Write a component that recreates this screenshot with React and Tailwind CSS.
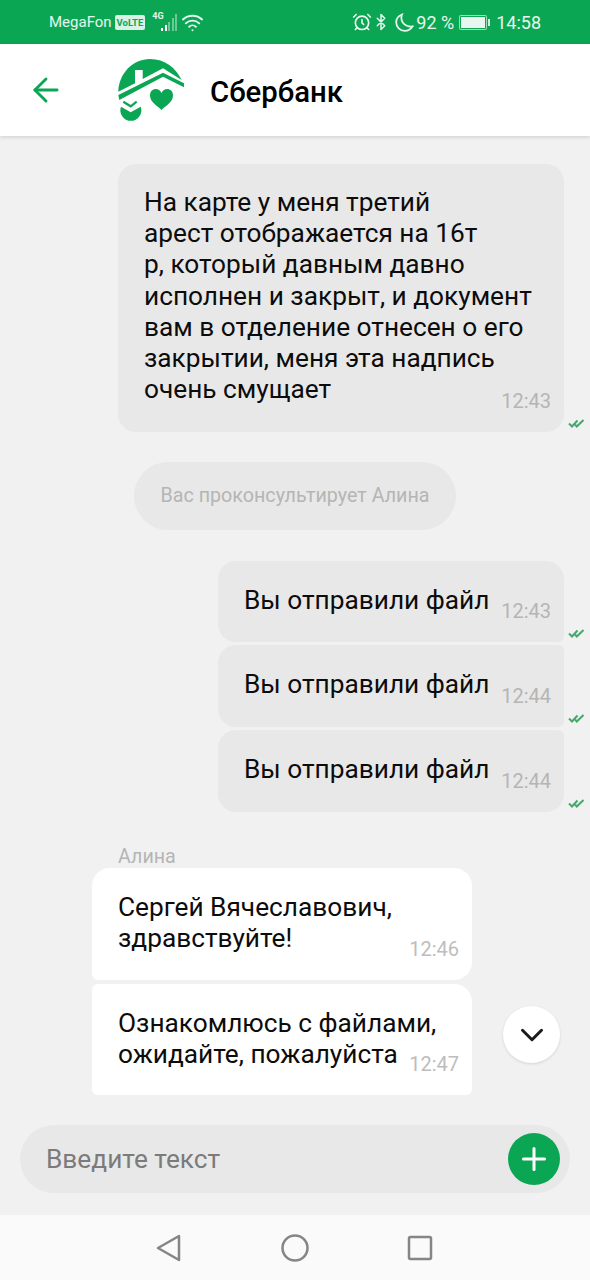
import { Fragment } from 'react'
import { ArrowLeft, Plus, ChevronDown, AlarmClock, Bluetooth, Wifi } from 'lucide-react'

function Checks() {
  return (
    <svg className="absolute right-[-21px] bottom-[3px]" width="17" height="11" viewBox="0 0 17 11" fill="none" stroke="#45a86c" strokeWidth="2">
      <path d="M1 5.5 L4 8.5 L9.5 2.5" />
      <path d="M7 6.5 L8.8 8.5 L15.5 2" />
    </svg>
  )
}

function Outgoing({ width, height, rounded, time, lines }) {
  return (
    <div className={`relative self-end bg-[#e8e8e8] pl-[26px] text-[26.25px] leading-[31.2px] text-[#0c0c0c] ${width} ${height} ${rounded}`}>
      {lines.map((l) => (
        <Fragment key={l}>{l}<br /></Fragment>
      ))}
      <span className="absolute right-[13px] bottom-[19px] text-[20px] leading-[24px] text-[#b5b5b5]">{time}</span>
      <Checks />
    </div>
  )
}

function Incoming({ lines, time, height, rounded, className }) {
  return (
    <div className={`relative ml-[92px] w-[380px] shrink-0 bg-white pl-[26px] pt-[24px] text-[26.25px] leading-[31.2px] text-[#0c0c0c] ${height} ${rounded} ${className || ''}`}>
      {lines.map((l) => (
        <Fragment key={l}>{l}<br /></Fragment>
      ))}
      <span className="absolute right-[13px] bottom-[19px] text-[20px] leading-[24px] text-[#bdbdbd]">{time}</span>
    </div>
  )
}

function Logo() {
  return (
    <svg width="68" height="62" viewBox="0 0 68 62" fill="#0ba653">
      {/* dome with chimney cut out */}
      <path d="M0.3 32.7 C1 14 15 0 32 0 C47 0 58 9 63.7 21 L45 9.3 L24.7 20 L24.7 11 L17 11 L17 24.3 Z" />
      {/* roof */}
      <path d="M0.3 36 L45 13.7 L66 24.3 L66 28.3 L45 17.7 L1.3 41 Z" />
      {/* heart */}
      <path d="M32 36.5 C32 29 41 28 43.5 34 C46 28 55 29 55 36.5 C55 43 48 46.5 43.5 51 C39 46.5 32 43 32 36.5 Z" />
      {/* check badge */}
      <path d="M3 47.7 L12.7 53.3 L22.7 47.7 A10.5 10.5 0 1 1 3 47.7 Z" />
      <path d="M5.3 42.7 L12.7 47.3 L18.7 42.7" fill="none" stroke="#0ba653" strokeWidth="2.2" />
    </svg>
  )
}

function Signal() {
  return (
    <div className="flex h-[17px] items-end gap-[1.5px]">
      {[3, 6, 9, 13, 17].map((h, i) => (
        <div key={h} className={`w-[2px] ${i < 2 ? 'bg-white' : 'bg-white/40'}`} style={{ height: h }} />
      ))}
    </div>
  )
}

function MoonIcon() {
  return (
    <svg className="ml-[5px]" width="19" height="19" viewBox="0 0 19 19" fill="none" stroke="currentColor" strokeWidth="1.8">
      <path d="M7 1.5 C5 7 8 14 17.5 13.5 C15.5 16.5 12.5 17.8 9.8 17.8 C5 17.8 1.2 14 1.2 9.3 C1.2 6 3.5 3 7 1.5 Z" />
    </svg>
  )
}

export default function App() {
  return (
    <div className="relative flex h-[1280px] w-[590px] flex-col overflow-hidden bg-[#f1f1f1] font-['Roboto',sans-serif]">
      {/* status bar */}
      <div className="flex h-[44px] shrink-0 items-center bg-[#0ba653] pl-[49px] pr-[49px] text-white/90">
        <span className="text-[15px]">MegaFon</span>
        <span className="ml-[3px] rounded-[2px] bg-white/85 px-[2px] text-[9.5px] font-bold leading-[15px] text-[#0ba653]">VoLTE</span>
        <div className="relative ml-[7px] flex items-end">
          <span className="absolute left-0 top-[-3px] text-[9px] font-bold leading-[10px]">4G</span>
          <div className="w-[9px]" />
          <Signal />
        </div>
        <Wifi size={23} className="ml-[4px]" strokeWidth={2} />
        <AlarmClock size={20} className="ml-auto" strokeWidth={2} />
        <Bluetooth size={18} className="ml-0" strokeWidth={2} />
        <MoonIcon />
        <span className="ml-[2px] text-[18px]">92 %</span>
        <div className="ml-[5px] flex items-center">
          <div className="h-[15px] w-[28px] rounded-[2px] border border-white/60 bg-white/90 bg-clip-content p-[1px]" />
          <div className="ml-[1px] h-[7px] w-[2px] bg-white/80" />
        </div>
        <span className="ml-[6px] text-[18px]">14:58</span>
      </div>

      {/* header */}
      <div className="z-10 flex h-[92px] shrink-0 items-center bg-white pl-[27px] shadow-[0_1px_4px_rgba(0,0,0,0.15)]">
        <ArrowLeft size={38} color="#0ba653" strokeWidth={1.8} />
        <div className="ml-[53px]"><Logo /></div>
        <span className="ml-[24px] mt-[6px] text-[29.3px] font-medium text-black">Сбербанк</span>
      </div>

      {/* messages */}
      <div className="flex min-h-0 flex-1 flex-col overflow-hidden pt-[28px]">
        <Outgoing
          width="mr-[26px] w-[446px]"
          height="h-[268px] shrink-0 pt-[23px]"
          rounded="rounded-[18px]"
          time="12:43"
          lines={['На карте у меня третий', 'арест отображается на 16т', 'р, который давным давно', 'исполнен и закрыт, и документ', 'вам в отделение отнесен о его', 'закрытии, меня эта надпись', 'очень смущает']}
        />
        <div className="ml-[134px] mt-[30px] flex h-[68px] w-[322px] shrink-0 items-center justify-center rounded-[34px] bg-[#e8e8e8] text-[19.7px] text-[#b5b5b5]">
          Вас проконсультирует Алина
        </div>
        <Outgoing
          width="mr-[26px] w-[346px]"
          height="mt-[31px] h-[81px] shrink-0 pt-[24px]"
          rounded="rounded-t-[18px] rounded-bl-[18px] rounded-br-[6px]"
          time="12:43"
          lines={['Вы отправили файл']}
        />
        <Outgoing
          width="mr-[26px] w-[346px]"
          height="mt-[3px] h-[82px] shrink-0 pt-[24px]"
          rounded="rounded-l-[18px] rounded-r-[6px]"
          time="12:44"
          lines={['Вы отправили файл']}
        />
        <Outgoing
          width="mr-[26px] w-[346px]"
          height="mt-[3px] h-[82px] shrink-0 pt-[24px]"
          rounded="rounded-l-[18px] rounded-tr-[6px] rounded-br-[18px]"
          time="12:44"
          lines={['Вы отправили файл']}
        />
        <div className="ml-[118px] mt-[33px] h-[23px] shrink-0 text-[19.7px] leading-[23px] text-[#b5b5b5]">Алина</div>
        <Incoming
          height="h-[112px]"
          rounded="rounded-t-[18px] rounded-br-[18px] rounded-bl-[6px]"
          time="12:46"
          lines={['Сергей Вячеславович,', 'здравствуйте!']}
        />
        <Incoming
          height="h-[111px]"
          rounded="rounded-tl-[6px] rounded-tr-[18px] rounded-b-[6px]"
          time="12:47"
          lines={['Ознакомлюсь с файлами,', 'ожидайте, пожалуйста']}
          className="mt-[4px]"
        />
      </div>

      {/* scroll down */}
      <div className="absolute left-[503px] top-[1006px] flex h-[57px] w-[57px] items-center justify-center rounded-full bg-white shadow-[0_1px_3px_rgba(0,0,0,0.12)]">
        <ChevronDown size={38} color="#1c1c1c" strokeWidth={1.9} />
      </div>

      {/* input */}
      <div className="mb-[22px] ml-[20px] mt-[30px] flex h-[68px] w-[550px] shrink-0 items-center justify-between rounded-[34px] bg-[#e8e8e8] pl-[26px] pr-[10px]">
        <span className="mt-[1px] text-[26.25px] text-[#7b7b7b]">Введите текст</span>
        <div className="flex h-[52px] w-[52px] items-center justify-center rounded-full bg-[#0ba653]">
          <Plus size={36} color="#fff" strokeWidth={2} />
        </div>
      </div>

      {/* nav bar */}
      <div className="flex h-[65px] shrink-0 items-center bg-[#fafafa] pl-[156px]">
        <svg width="26" height="28" viewBox="0 0 26 28" fill="none" stroke="#858585" strokeWidth="2.5" strokeLinejoin="round">
          <path d="M2 14 L23 2 V26 Z" />
        </svg>
        <svg className="ml-[99px]" width="28" height="28" viewBox="0 0 28 28" fill="none" stroke="#858585" strokeWidth="2.5">
          <circle cx="14" cy="14" r="12.5" />
        </svg>
        <svg className="ml-[98px]" width="26" height="26" viewBox="0 0 26 26" fill="none" stroke="#858585" strokeWidth="2.5" strokeLinejoin="round">
          <rect x="2" y="2" width="22" height="22" rx="1.5" />
        </svg>
      </div>
    </div>
  )
}
